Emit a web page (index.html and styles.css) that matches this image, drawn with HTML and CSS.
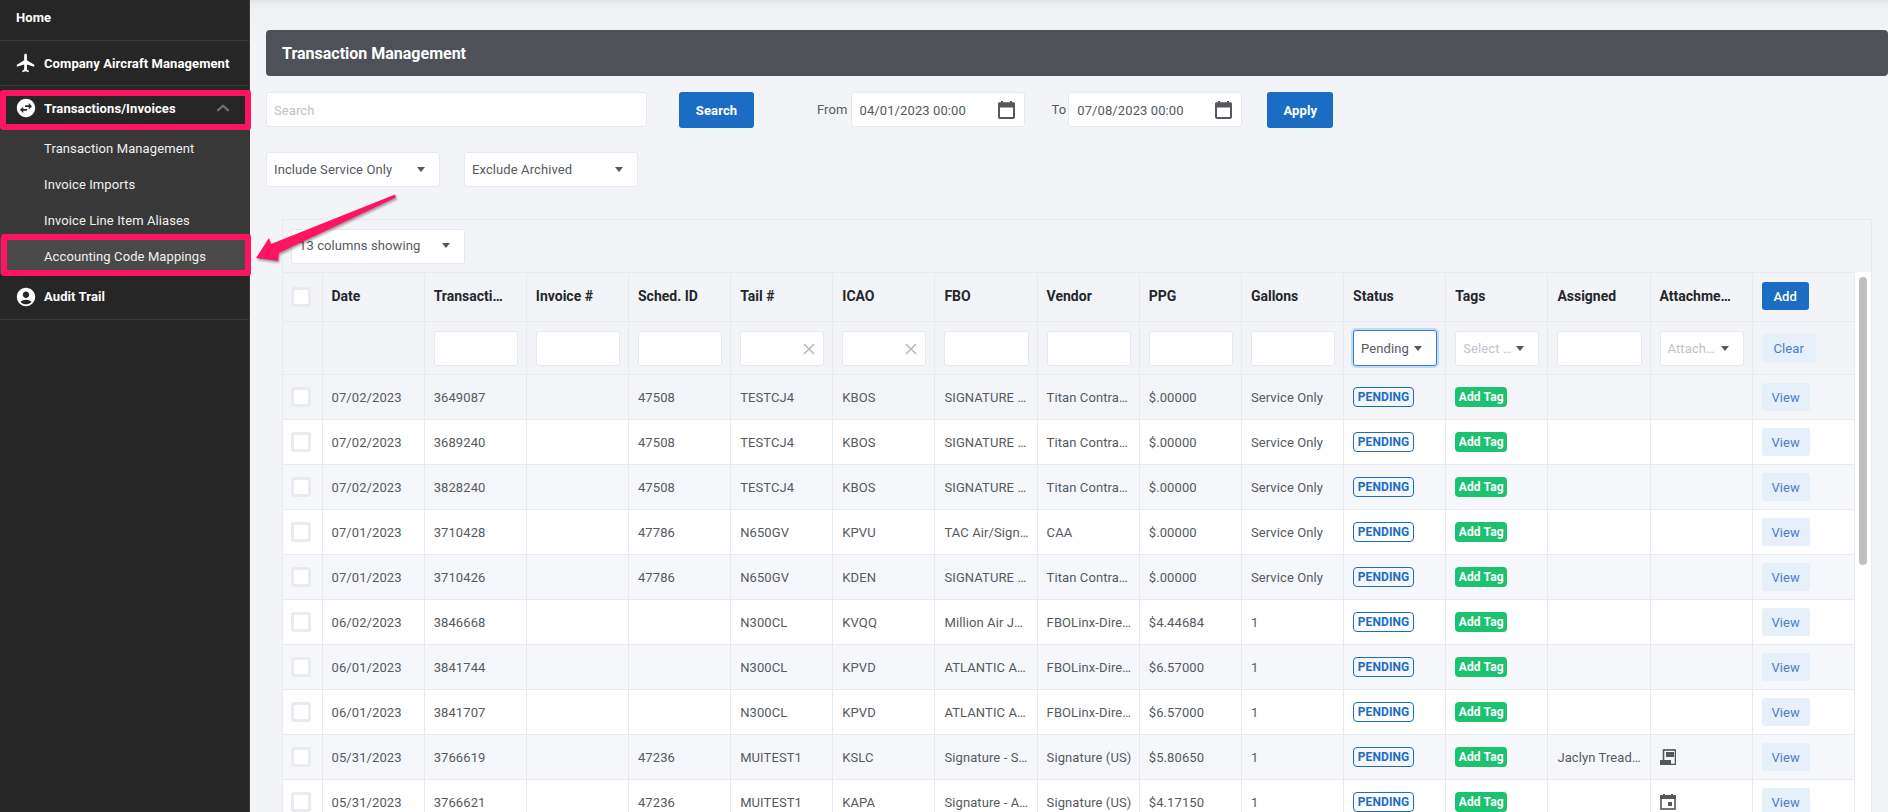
FILE: index.html
```html
<!DOCTYPE html>
<html lang="en">
<head>
<meta charset="utf-8">
<title>Transaction Management</title>
<link rel="stylesheet" href="styles.css">
</head>
<body>
<div class="app">
  <aside class="sidebar">
    <div class="nav-home">Home</div>
    <div class="nav-item">
      <svg class="nav-icon" viewBox="0 0 24 24"><path d="M21 16v-2l-8-5V3.5c0-.83-.67-1.5-1.5-1.5S10 2.67 10 3.5V9l-8 5v2l8-2.5V19l-2 1.5V22l3.5-1 3.5 1v-1.5L13 19v-5.5l8 2.5z"/></svg>
      <span>Company Aircraft Management</span>
    </div>
    <div class="nav-item nav-open">
      <svg class="nav-icon" viewBox="0 0 24 24"><path fill-rule="evenodd" d="M22 12c0 5.52-4.48 10-10 10S2 17.52 2 12 6.48 2 12 2s10 4.48 10 10zm-7-5.5V9h-4v2h4v2.5l3.5-3.5L15 6.5zm-6 4L5.5 14 9 17.5V15h4v-2H9v-2.5z"/></svg>
      <span>Transactions/Invoices</span>
      <svg class="nav-chevron" viewBox="0 0 12 7"><path d="M1 6l5-4.5L11 6"/></svg>
    </div>
    <div class="subnav">
      <div class="sub-item">Transaction Management</div>
      <div class="sub-item">Invoice Imports</div>
      <div class="sub-item">Invoice Line Item Aliases</div>
      <div class="sub-item sub-active">Accounting Code Mappings</div>
    </div>
    <div class="nav-item nav-last">
      <svg class="nav-icon" viewBox="0 0 24 24"><path d="M12 2C6.48 2 2 6.48 2 12s4.48 10 10 10 10-4.48 10-10S17.52 2 12 2zm0 4c1.93 0 3.5 1.57 3.5 3.5S13.93 13 12 13s-3.5-1.57-3.5-3.5S10.07 6 12 6zm0 14c-2.03 0-4.43-.82-6.14-2.88C7.55 15.8 9.68 15 12 15s4.45.8 6.14 2.12C16.43 19.18 14.03 20 12 20z"/></svg>
      <span>Audit Trail</span>
    </div>
  </aside>

  <main class="main">
    <h1 class="title-bar">Transaction Management</h1>

    <div class="toolbar">
      <div class="field field-search placeholder">Search</div>
      <button class="btn btn-search">Search</button>
      <span class="date-label label-from">From</span>
      <div class="field field-date">04/01/2023 00:00
        <svg class="cal" viewBox="0 0 17 18"><path class="cal-ears" d="M3 0h2v3H3zM12 0h2v3h-2z"/><rect class="cal-band" x="0" y="1.5" width="17" height="5" rx="1"/><rect class="cal-box" x="1" y="2.5" width="15" height="14.5" rx="1"/></svg>
      </div>
      <span class="date-label label-to">To</span>
      <div class="field field-date">07/08/2023 00:00
        <svg class="cal" viewBox="0 0 17 18"><path class="cal-ears" d="M3 0h2v3H3zM12 0h2v3h-2z"/><rect class="cal-band" x="0" y="1.5" width="17" height="5" rx="1"/><rect class="cal-box" x="1" y="2.5" width="15" height="14.5" rx="1"/></svg>
      </div>
      <button class="btn btn-apply">Apply</button>
    </div>

    <div class="filters">
      <div class="field select">Include Service Only<i class="caret"></i></div>
      <div class="field select">Exclude Archived<i class="caret"></i></div>
    </div>

    <section class="panel">
      <div class="field select columns-select">13 columns showing<i class="caret"></i></div>
      <div class="table-wrap">
        <table class="grid">
          <thead>
            <tr class="head-row">
              <th class="col-check"><span class="check"></span></th>
              <th>Date</th><th>Transacti…</th><th>Invoice #</th><th>Sched. ID</th><th>Tail #</th><th>ICAO</th><th>FBO</th><th>Vendor</th><th>PPG</th><th>Gallons</th><th>Status</th><th>Tags</th><th>Assigned</th><th>Attachme…</th>
              <th><button class="btn btn-add">Add</button></th>
            </tr>
            <tr class="filter-row">
              <th></th><th></th>
              <th><div class="field cell-input"></div></th>
              <th><div class="field cell-input"></div></th>
              <th><div class="field cell-input"></div></th>
              <th><div class="field cell-input"><svg class="clear-x" viewBox="0 0 12 12"><path d="M1 1l10 10M11 1L1 11"/></svg></div></th>
              <th><div class="field cell-input"><svg class="clear-x" viewBox="0 0 12 12"><path d="M1 1l10 10M11 1L1 11"/></svg></div></th>
              <th><div class="field cell-input"></div></th>
              <th><div class="field cell-input"></div></th>
              <th><div class="field cell-input"></div></th>
              <th><div class="field cell-input"></div></th>
              <th><div class="field cell-input cell-select focused">Pending<i class="caret"></i></div></th>
              <th><div class="field cell-input cell-select placeholder">Select …<i class="caret"></i></div></th>
              <th><div class="field cell-input"></div></th>
              <th><div class="field cell-input cell-select placeholder">Attach…<i class="caret"></i></div></th>
              <th><button class="btn btn-soft btn-clear">Clear</button></th>
            </tr>
          </thead>
          <tbody>
            <tr><td><span class="check"></span></td><td>07/02/2023</td><td>3649087</td><td></td><td>47508</td><td>TESTCJ4</td><td>KBOS</td><td>SIGNATURE …</td><td>Titan Contra…</td><td>$.00000</td><td>Service Only</td><td><span class="badge">PENDING</span></td><td><span class="tag">Add Tag</span></td><td></td><td></td><td><button class="btn btn-soft">View</button></td></tr>
            <tr><td><span class="check"></span></td><td>07/02/2023</td><td>3689240</td><td></td><td>47508</td><td>TESTCJ4</td><td>KBOS</td><td>SIGNATURE …</td><td>Titan Contra…</td><td>$.00000</td><td>Service Only</td><td><span class="badge">PENDING</span></td><td><span class="tag">Add Tag</span></td><td></td><td></td><td><button class="btn btn-soft">View</button></td></tr>
            <tr><td><span class="check"></span></td><td>07/02/2023</td><td>3828240</td><td></td><td>47508</td><td>TESTCJ4</td><td>KBOS</td><td>SIGNATURE …</td><td>Titan Contra…</td><td>$.00000</td><td>Service Only</td><td><span class="badge">PENDING</span></td><td><span class="tag">Add Tag</span></td><td></td><td></td><td><button class="btn btn-soft">View</button></td></tr>
            <tr><td><span class="check"></span></td><td>07/01/2023</td><td>3710428</td><td></td><td>47786</td><td>N650GV</td><td>KPVU</td><td>TAC Air/Sign…</td><td>CAA</td><td>$.00000</td><td>Service Only</td><td><span class="badge">PENDING</span></td><td><span class="tag">Add Tag</span></td><td></td><td></td><td><button class="btn btn-soft">View</button></td></tr>
            <tr><td><span class="check"></span></td><td>07/01/2023</td><td>3710426</td><td></td><td>47786</td><td>N650GV</td><td>KDEN</td><td>SIGNATURE …</td><td>Titan Contra…</td><td>$.00000</td><td>Service Only</td><td><span class="badge">PENDING</span></td><td><span class="tag">Add Tag</span></td><td></td><td></td><td><button class="btn btn-soft">View</button></td></tr>
            <tr><td><span class="check"></span></td><td>06/02/2023</td><td>3846668</td><td></td><td></td><td>N300CL</td><td>KVQQ</td><td>Million Air J…</td><td>FBOLinx-Dire…</td><td>$4.44684</td><td>1</td><td><span class="badge">PENDING</span></td><td><span class="tag">Add Tag</span></td><td></td><td></td><td><button class="btn btn-soft">View</button></td></tr>
            <tr><td><span class="check"></span></td><td>06/01/2023</td><td>3841744</td><td></td><td></td><td>N300CL</td><td>KPVD</td><td>ATLANTIC A…</td><td>FBOLinx-Dire…</td><td>$6.57000</td><td>1</td><td><span class="badge">PENDING</span></td><td><span class="tag">Add Tag</span></td><td></td><td></td><td><button class="btn btn-soft">View</button></td></tr>
            <tr><td><span class="check"></span></td><td>06/01/2023</td><td>3841707</td><td></td><td></td><td>N300CL</td><td>KPVD</td><td>ATLANTIC A…</td><td>FBOLinx-Dire…</td><td>$6.57000</td><td>1</td><td><span class="badge">PENDING</span></td><td><span class="tag">Add Tag</span></td><td></td><td></td><td><button class="btn btn-soft">View</button></td></tr>
            <tr><td><span class="check"></span></td><td>05/31/2023</td><td>3766619</td><td></td><td>47236</td><td>MUITEST1</td><td>KSLC</td><td>Signature - S…</td><td>Signature (US)</td><td>$5.80650</td><td>1</td><td><span class="badge">PENDING</span></td><td><span class="tag">Add Tag</span></td><td>Jaclyn Tread…</td><td><svg class="attach" viewBox="0 0 16 16"><rect class="attach-box" x="3.5" y="1" width="12" height="14.5"/><path class="attach-fill" d="M4 0h1v1H4zM7 0h1v1H7zM10 0h1v1h-1zM13 0h1v1h-1zM6 3h8v5H6zM0 11h11v5H0z"/></svg></td><td><button class="btn btn-soft">View</button></td></tr>
            <tr><td><span class="check"></span></td><td>05/31/2023</td><td>3766621</td><td></td><td>47236</td><td>MUITEST1</td><td>KAPA</td><td>Signature - A…</td><td>Signature (US)</td><td>$4.17150</td><td>1</td><td><span class="badge">PENDING</span></td><td><span class="tag">Add Tag</span></td><td></td><td><svg class="attach" viewBox="0 0 16 16"><rect class="attach-box" x="1" y="2" width="14" height="13"/><path class="attach-fill" d="M3 0h2v2H3zM11 0h2v2h-2zM0 1h16v4H0zM8 8h4v4H8z"/></svg></td><td><button class="btn btn-soft">View</button></td></tr>
          </tbody>
        </table>
        <div class="scroll-track"><div class="scroll-thumb"></div></div>
      </div>
    </section>
  </main>
</div>

<div class="mark mark-open"></div>
<div class="mark mark-target"></div>
<svg class="mark-arrow" viewBox="0 0 160 80"><polygon points="6,73 19,53 21,59 145,9.5 146,12.5 29,68 28,76"/></svg>
</body>
</html>
```

FILE: styles.css
```css
* { box-sizing: border-box; }

html, body {
  margin: 0;
  height: 100%;
  overflow: hidden;
}

body {
  font-family: Roboto, "Liberation Sans", sans-serif;
  font-size: 13px;
  letter-spacing: .1px;
  color: #555a60;
}

.app {
  display: flex;
  height: 812px;
}

/* Sidebar */
.sidebar {
  flex: 0 0 250px;
  background: #262626;
  border-right: 1px solid #3a3a3a;
  color: #fff;
  font-weight: 700;
}

.nav-home {
  height: 41px;
  padding: 0 0 5px 16px;
  display: flex;
  align-items: center;
  border-bottom: 1px solid #3a3a3a;
}

.nav-item {
  height: 45px;
  display: flex;
  align-items: center;
  padding: 0 15px 0 15px;
  border-bottom: 1px solid #3a3a3a;
}

.nav-open { height: 44px; border-bottom: 0; }
.nav-last { height: 46px; }

.nav-icon {
  width: 22px;
  height: 22px;
  margin-right: 7px;
  fill: #fff;
  flex: none;
}

.nav-chevron {
  width: 14px;
  height: 8px;
  margin-left: auto;
  margin-right: 4px;
  fill: none;
  stroke: #6f6f6f;
  stroke-width: 2;
}

.subnav { background: #383838; }

.sub-item {
  height: 36px;
  padding-left: 44px;
  display: flex;
  align-items: center;
  font-weight: 400;
  color: #f0f0f0;
}

.sub-active { background: #4a4a4a; }

/* Main */
.main {
  flex: 1;
  min-width: 0;
  padding: 30px 0 0 16px;
  background: linear-gradient(#e3e4e8 0, #eeeff2 5px, #f3f4f8 40px);
  overflow: hidden;
}

.title-bar {
  margin: 0;
  height: 46px;
  padding: 0 16px;
  display: flex;
  align-items: center;
  background: #4e5157;
  border-radius: 4px;
  color: #fff;
  font-size: 16px;
  font-weight: 700;
  letter-spacing: 0;
}

.toolbar {
  display: flex;
  align-items: flex-start;
  margin-top: 16px;
}

.field {
  background: #fff;
  border: 1px solid #e6e8ee;
  border-radius: 3px;
  height: 35px;
  display: flex;
  align-items: center;
  padding: 0 7px;
  color: #555a60;
  white-space: nowrap;
}

.placeholder { color: #bfc2c9; }

.field-search { width: 381px; padding-top: 1px; }

.btn {
  border: 0;
  border-radius: 3px;
  background: #1a6dc3;
  color: #fff;
  font: 700 13px Roboto, "Liberation Sans", sans-serif;
  letter-spacing: .1px;
  padding: 0;
}

.btn-search { width: 75px; height: 36px; margin-left: 32px; }
.btn-apply { width: 66px; height: 36px; margin-left: 25px; }

.date-label { line-height: 36px; }
.label-from { margin-left: 63px; margin-right: 3px; }
.label-to { margin-left: 27px; margin-right: 2px; }

.field-date {
  width: 174px;
  justify-content: space-between;
  padding-top: 1px;
  padding-left: 8px;
  padding-right: 9px;
}

.cal { width: 17px; height: 18px; flex: none; }
.cal-ears, .cal-band { fill: #55575c; }
.cal-box { fill: none; stroke: #55575c; stroke-width: 2; }

.filters {
  display: flex;
  gap: 24px;
  margin-top: 24px;
}

.select {
  width: 174px;
  justify-content: space-between;
  padding-right: 14px;
}

.caret {
  flex: none;
  width: 0;
  height: 0;
  border-left: 4.5px solid transparent;
  border-right: 4.5px solid transparent;
  border-top: 5px solid #55575c;
}

/* Panel and table */
.panel {
  width: 1590px;
  margin: 32px 0 0 16px;
  padding-top: 9px;
  border: 1px solid #e8eaf0;
  border-bottom: 0;
}

.columns-select { margin: 0 0 8px 8px; padding-bottom: 2px; }

.table-wrap { display: flex; align-items: stretch; }

.grid {
  flex: none;
  width: 1572px;
  table-layout: fixed;
  border-collapse: collapse;
  border-top: 1px solid #e8eaf0;
}

.grid th,
.grid td {
  border: 1px solid #e8eaf0;
  border-left: 0;
  padding: 0 9px;
  text-align: left;
  white-space: nowrap;
}

.grid th {
  color: #24272b;
  font-size: 14px;
  font-weight: 700;
  letter-spacing: 0;
}

.col-check { width: 39px; }
.grid .col-check, .grid td:first-child { padding: 0 0 0 8px; }

.head-row { height: 49px; }
.head-row th { padding-bottom: 2px; }
.filter-row { height: 53px; }
.filter-row th { padding-right: 8px; }

.grid tbody tr { height: 45px; background: #fff; }
.grid tbody tr:nth-child(odd) { background: #f6f7fb; }
.grid tbody tr:first-child { background: #f4f5f9; }

.check {
  display: block;
  width: 20px;
  height: 20px;
  background: #fff;
  border: 3px solid #e9ebf0;
  border-radius: 3px;
}

.cell-input {
  width: 100%;
  font-weight: 400;
  font-size: 13px;
  letter-spacing: .1px;
  position: relative;
}

.cell-select {
  justify-content: space-between;
  padding-right: 14px;
}

.focused {
  height: 36px;
  border: 1px solid #2f80d8;
  box-shadow: 0 0 0 2px #c4d9f6;
}

.clear-x {
  position: absolute;
  right: 8px;
  top: 11px;
  width: 12px;
  height: 12px;
  fill: none;
  stroke: #b8b8bc;
  stroke-width: 1.6;
}

.badge {
  display: inline-block;
  height: 20px;
  width: 61px;
  border: 1px solid #1a6dc3;
  border-radius: 4px;
  color: #1a6dc3;
  font-size: 12px;
  font-weight: 700;
  line-height: 18px;
  text-align: center;
}

.tag {
  display: inline-block;
  height: 20px;
  width: 52px;
  border-radius: 4px;
  background: #1cc26f;
  color: #fff;
  font-size: 12px;
  font-weight: 700;
  line-height: 20px;
  text-align: center;
}

.btn-add { width: 47px; height: 28px; font-weight: 500; }

.btn-soft {
  width: 48px;
  height: 28px;
  background: #e5f0fb;
  color: #4b7ec8;
  font-weight: 400;
  display: block;
}

.btn-clear { width: 54px; }

.attach { display: block; width: 16px; height: 16px; }
.attach-box { fill: none; stroke: #55575c; stroke-width: 1.6; }
.attach-fill { fill: #55575c; }

.scroll-track {
  flex: 0 0 16px;
  padding: 5px 4px 0;
  background: #fff;
}

.scroll-thumb {
  height: 288px;
  background: #bfbfbf;
  border-radius: 4px;
}

/* Annotation overlays */
.mark {
  position: absolute;
  border: 6px solid #ff1461;
  border-radius: 3px;
}

.mark-open { left: 0; top: 90px; width: 251px; height: 40px; }
.mark-target { left: 1px; top: 234px; width: 250px; height: 42px; }

.mark-arrow {
  position: absolute;
  left: 250px;
  top: 185px;
  width: 160px;
  height: 80px;
  fill: #ff1461;
  filter: drop-shadow(1px 2px 1px rgba(0, 0, 0, .35));
}
```
